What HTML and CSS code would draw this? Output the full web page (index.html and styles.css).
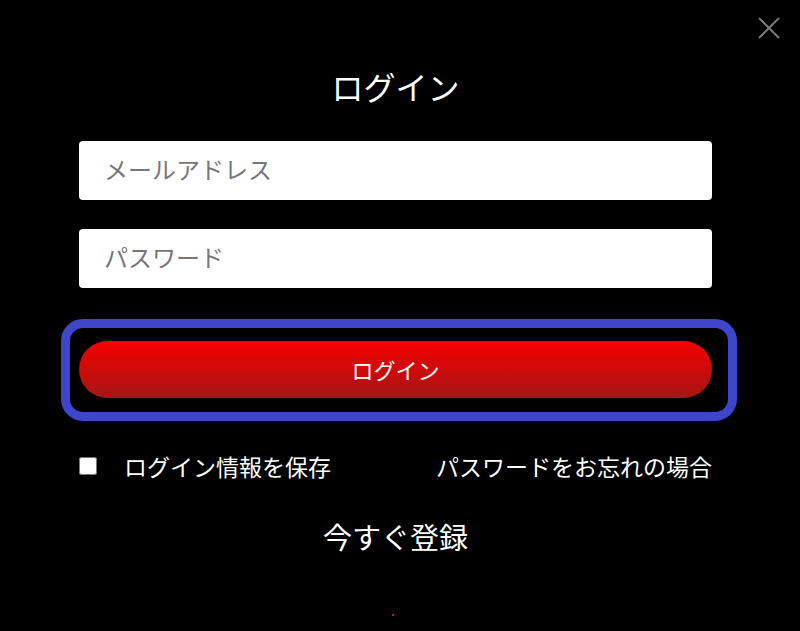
FILE: index.html
```html
<html lang="ja">
<head>
    <meta charset="UTF-8">
    <meta name="viewport" content="width=device-width, initial-scale=1.0">
    <title>ログイン</title>
    <link rel="stylesheet" href="styles.css">
</head>
<body>
    <div class="modal">
        <button class="close" aria-label="閉じる">
            <svg width="22" height="22" viewBox="0 0 22 22">
                <path d="M1 1 L21 21 M21 1 L1 21" stroke="#7a7a7a" stroke-width="2" fill="none"/>
            </svg>
        </button>
        <div class="form">
            <h1 class="title">ログイン</h1>
            <input class="field first" type="email" placeholder="メールアドレス">
            <input class="field" type="password" placeholder="パスワード">
            <div class="focus-ring">
                <button class="login">ログイン</button>
            </div>
            <div class="options">
                <label class="remember"><input type="checkbox"><span>ログイン情報を保存</span></label>
                <a class="forgot" href="#">パスワードをお忘れの場合</a>
            </div>
            <a class="signup" href="#">今すぐ登録</a>
            <div class="dot"></div>
        </div>
    </div>
</body>
</html>
```

FILE: styles.css
```css
body {
    margin: 0;
    background: #000;
    font-family: "Noto Sans CJK JP", "Noto Sans", sans-serif;
    color: #fff;
}

.modal {
    position: relative;
    height: 631px;
    overflow: hidden;
}

.close {
    position: absolute;
    top: 17px;
    left: 758px;
    width: 22px;
    height: 22px;
    padding: 0;
    border: none;
    background: none;
    cursor: pointer;
}

.close svg {
    display: block;
}

.form {
    width: 633px;
    margin-left: 79px;
    padding-top: 68px;
    display: flex;
    flex-direction: column;
}

.title {
    margin: 0;
    font-size: 32px;
    font-weight: 400;
    line-height: 36px;
    text-align: center;
}

.field {
    height: 59px;
    margin-top: 29px;
    padding: 0 25px 4px;
    border: none;
    border-radius: 4px;
    background: #fff;
    font-family: inherit;
    font-size: 24px;
    color: #333;
    box-sizing: border-box;
}

.field.first {
    margin-top: 37px;
}

.field::placeholder {
    color: #777;
}

.focus-ring {
    margin: 31px 0 0 -18px;
    width: 676px;
    box-sizing: border-box;
    border: 9px solid #4046cc;
    border-radius: 22px;
    padding: 13px 16px 14px 9px;
}

.login {
    display: block;
    width: 633px;
    height: 57px;
    padding-bottom: 2px;
    border: none;
    border-radius: 29px;
    background: linear-gradient(#f70000, #a41616);
    color: #fff;
    font-family: inherit;
    font-size: 22px;
    font-weight: 400;
    cursor: pointer;
}

.options {
    margin-top: 29px;
    display: flex;
    justify-content: space-between;
    align-items: center;
    height: 32px;
    font-size: 23px;
}

.remember {
    display: flex;
    align-items: center;
}

.remember input {
    width: 18px;
    height: 18px;
    margin: 0 27px 0 0;
    accent-color: #fff;
}

.forgot {
    color: #fff;
    text-decoration: none;
}

.signup {
    margin-top: 34px;
    align-self: center;
    font-size: 29px;
    line-height: 40px;
    color: #fff;
    text-decoration: none;
}

.dot {
    align-self: center;
    width: 2px;
    height: 2px;
    margin: 58px 0 0 -6px;
    background: #c21a1a;
}
```
